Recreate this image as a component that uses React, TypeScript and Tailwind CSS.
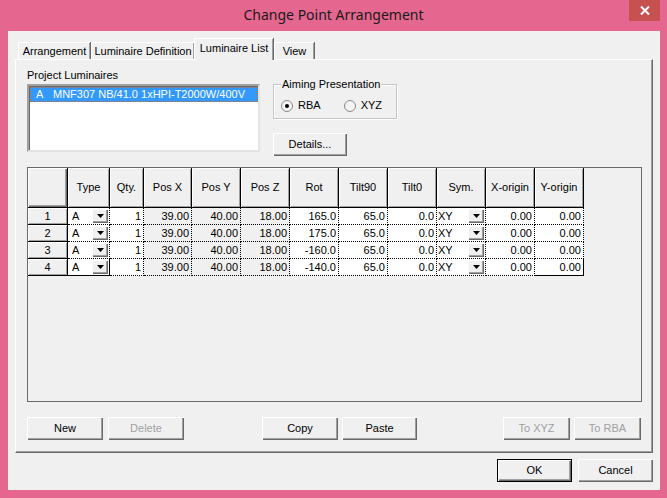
import React from "react";

const raised =
  "bg-[#f0f0f0] shadow-[inset_1px_1px_0_#ffffff,inset_-1px_-1px_0_#696969,inset_-2px_-2px_0_#a0a0a0]";

function Btn({
  label,
  w = "w-[75px]",
  disabled = false,
  def = false,
  className = "",
}: {
  label: string;
  w?: string;
  disabled?: boolean;
  def?: boolean;
  className?: string;
}) {
  return (
    <div
      className={`${w} h-[23px] flex items-center justify-center ${
        def
          ? "border border-black bg-[#f0f0f0] shadow-[inset_1px_1px_0_#ffffff,inset_-1px_-1px_0_#696969,inset_-2px_-2px_0_#a0a0a0]"
          : raised
      } ${disabled ? "text-[#a0a0a0]" : "text-black"} ${className}`}
    >
      {label}
    </div>
  );
}

function Tri() {
  return (
    <svg width="7" height="4" viewBox="0 0 7 4">
      <path d="M0 0H7L3.5 4Z" fill="#000" />
    </svg>
  );
}

function DropBtn() {
  return (
    <div
      className={`absolute right-[1px] top-[1px] w-[16px] h-[14px] flex items-center justify-center ${raised}`}
    >
      <Tri />
    </div>
  );
}

const cols = [
  { label: "Type", w: "w-[42px]" },
  { label: "Qty.", w: "w-[34px]" },
  { label: "Pos X", w: "w-[48px]" },
  { label: "Pos Y", w: "w-[49px]" },
  { label: "Pos Z", w: "w-[49px]" },
  { label: "Rot", w: "w-[49px]" },
  { label: "Tilt90", w: "w-[49px]" },
  { label: "Tilt0", w: "w-[49px]" },
  { label: "Sym.", w: "w-[49px]" },
  { label: "X-origin", w: "w-[49px]" },
  { label: "Y-origin", w: "w-[49px]" },
];

const rows = [
  ["A", "1", "39.00", "40.00", "18.00", "165.0", "65.0", "0.0", "XY", "0.00", "0.00"],
  ["A", "1", "39.00", "40.00", "18.00", "175.0", "65.0", "0.0", "XY", "0.00", "0.00"],
  ["A", "1", "39.00", "40.00", "18.00", "-160.0", "65.0", "0.0", "XY", "0.00", "0.00"],
  ["A", "1", "39.00", "40.00", "18.00", "-140.0", "65.0", "0.0", "XY", "0.00", "0.00"],
];

function Grid() {
  return (
    <div className="w-[615px] h-[235px] border border-[#696969] bg-[#f0f0f0] flex flex-col">
      <div className="flex h-[40px]">
        <div className={`w-[40px] h-[40px] border-r border-b border-black ${raised}`} />
        {cols.map((c) => (
          <div
            key={c.label}
            className={`${c.w} h-[40px] border-r border-b border-black flex items-center justify-center bg-[#f0f0f0] shadow-[inset_1px_1px_0_#ffffff,inset_-1px_-1px_0_#a0a0a0]`}
          >
            {c.label}
          </div>
        ))}
      </div>
      {rows.map((r, ri) => {
        const last = ri === rows.length - 1;
        const bb = last ? "border-b border-b-black" : "border-b border-dotted border-b-black";
        return (
          <div key={ri} className="flex h-[17px]">
            <div
              className={`w-[40px] h-[17px] border-r border-b border-black flex items-center justify-center bg-[#f0f0f0] shadow-[inset_1px_1px_0_#ffffff,inset_-1px_-1px_0_#a0a0a0]`}
            >
              {ri + 1}
            </div>
            {r.map((v, ci) => {
              const c = cols[ci];
              const lastCol = ci === cols.length - 1;
              const br = lastCol ? "border-r border-r-black" : "border-r border-dotted border-r-black";
              const grey = ci >= 2 && ci <= 4;
              if (ci === 0 || ci === 8) {
                return (
                  <div
                    key={ci}
                    className={`${c.w} h-[17px] relative bg-white ${bb} ${
                      ci === 0 ? "border-r border-r-black pl-[4px]" : `${br} pl-[1px]`
                    } flex items-center`}
                  >
                    {v}
                    <DropBtn />
                  </div>
                );
              }
              return (
                <div
                  key={ci}
                  className={`${c.w} h-[17px] ${grey ? "bg-[#f0f0f0]" : "bg-white"} ${br} ${bb} flex items-center justify-end pr-[2px]`}
                >
                  {v}
                </div>
              );
            })}
          </div>
        );
      })}
    </div>
  );
}

function Radio({ label, checked }: { label: string; checked?: boolean }) {
  return (
    <div className="flex items-center">
      <div className="w-[12px] h-[12px] rounded-full border border-[#8a8a8a] bg-[#f4f4f4] flex items-center justify-center">
        {checked && <div className="w-[4px] h-[4px] rounded-full bg-black" />}
      </div>
      <span className="ml-[5px]">{label}</span>
    </div>
  );
}

export default function App() {
  return (
    <div className="w-[667px] h-[498px] bg-[#e5678f] flex flex-col font-['Liberation_Sans',Arial,sans-serif] text-[11px] text-black leading-[13px]">
      <div className="h-[31px] relative flex items-center justify-center">
        <span className="font-['Noto_Sans',sans-serif] text-[14px] leading-[20px] text-[#1a1a1a] -mt-[1px]">
          Change Point Arrangement
        </span>
        <div className="absolute right-[7px] top-0 w-[31px] h-[21px] bg-[#c75050] flex items-center justify-center">
          <svg width="10" height="9" viewBox="0 0 10 9">
            <path d="M1 0.5L9 8.5M9 0.5L1 8.5" stroke="#fff" strokeWidth="2" />
          </svg>
        </div>
      </div>
      <div className="ml-[8px] w-[652px] h-[459px] bg-[#f0f0f0] flex flex-col">
        <div className="flex items-end h-[28px] pl-[10px]">
          <div className={`w-[72px] h-[17px] flex items-center justify-center border-t border-l border-white shadow-[inset_-1px_0_0_#a0a0a0,1px_0_0_#696969]`}>
            Arrangement
          </div>
          <div className={`w-[103px] ml-[1px] h-[17px] flex items-center justify-center border-t border-l border-white shadow-[inset_-1px_0_0_#a0a0a0,1px_0_0_#696969]`}>
            Luminaire Definition
          </div>
          <div className="w-[79px] h-[22px] -mb-[1px] relative z-10 bg-[#f0f0f0] flex items-center justify-center pb-[2px] border-t border-l border-white shadow-[inset_-1px_0_0_#a0a0a0,1px_0_0_#696969]">
            Luminaire List
          </div>
          <div className={`w-[40px] ml-[1px] h-[17px] flex items-center justify-center border-t border-l border-white shadow-[inset_-1px_0_0_#a0a0a0,1px_0_0_#696969]`}>
            View
          </div>
        </div>
        <div className="ml-[7px] w-[638px] h-[394px] border border-t-white border-l-white border-r-[#696969] border-b-[#696969] shadow-[inset_-1px_-1px_0_#a0a0a0] pl-[11px] pt-[9px] flex flex-col">
          <div className="h-[98px] flex">
            <div className="w-[233px] flex flex-col">
              <div className="h-[13px]">Project Luminaires</div>
              <div className="mt-[2px] w-[233px] h-[68px] bg-white border-2 border-t-[#a0a0a0] border-l-[#a0a0a0] border-b-[#e3e3e3] border-r-[#e3e3e3] shadow-[inset_1px_1px_0_#696969]">
                <div className="mt-[1px] ml-[1px] mr-0 h-[15px] bg-[#3399ff] text-white border border-dotted border-[#c86a2a] flex items-center">
                  <span className="w-[22px] pl-[5px]">A</span>
                  <span>MNF307 NB/41.0 1xHPI-T2000W/400V</span>
                </div>
              </div>
            </div>
            <div className="ml-[13px] flex flex-col">
              <div className="mt-[15px] w-[124px] h-[35px] relative border border-[#c5c5c5] shadow-[inset_1px_1px_0_#ffffff,1px_1px_0_#ffffff]">
                <span className="absolute -top-[7px] left-[7px] px-[1px] bg-[#f0f0f0]">
                  Aiming Presentation
                </span>
                <div className="flex mt-[14px] ml-[7px]">
                  <Radio label="RBA" checked />
                  <div className="ml-[23px]">
                    <Radio label="XYZ" />
                  </div>
                </div>
              </div>
              <Btn label="Details..." w="w-[74px]" className="mt-[14px]" />
            </div>
          </div>
          <Grid />
          <div className="mt-[15px] flex">
            <Btn label="New" w="w-[76px]" />
            <Btn label="Delete" w="w-[76px]" disabled className="ml-[5px]" />
            <Btn label="Copy" w="w-[76px]" className="ml-[78px]" />
            <Btn label="Paste" w="w-[75px]" className="ml-[4px]" />
            <Btn label="To XYZ" w="w-[67px]" disabled className="ml-[86px]" />
            <Btn label="To RBA" w="w-[67px]" disabled className="ml-[4px]" />
          </div>
        </div>
        <div className="mt-[6px] flex justify-end pr-[7px] gap-[6px]">
          <Btn label="OK" def />
          <Btn label="Cancel" />
        </div>
      </div>
    </div>
  );
}
